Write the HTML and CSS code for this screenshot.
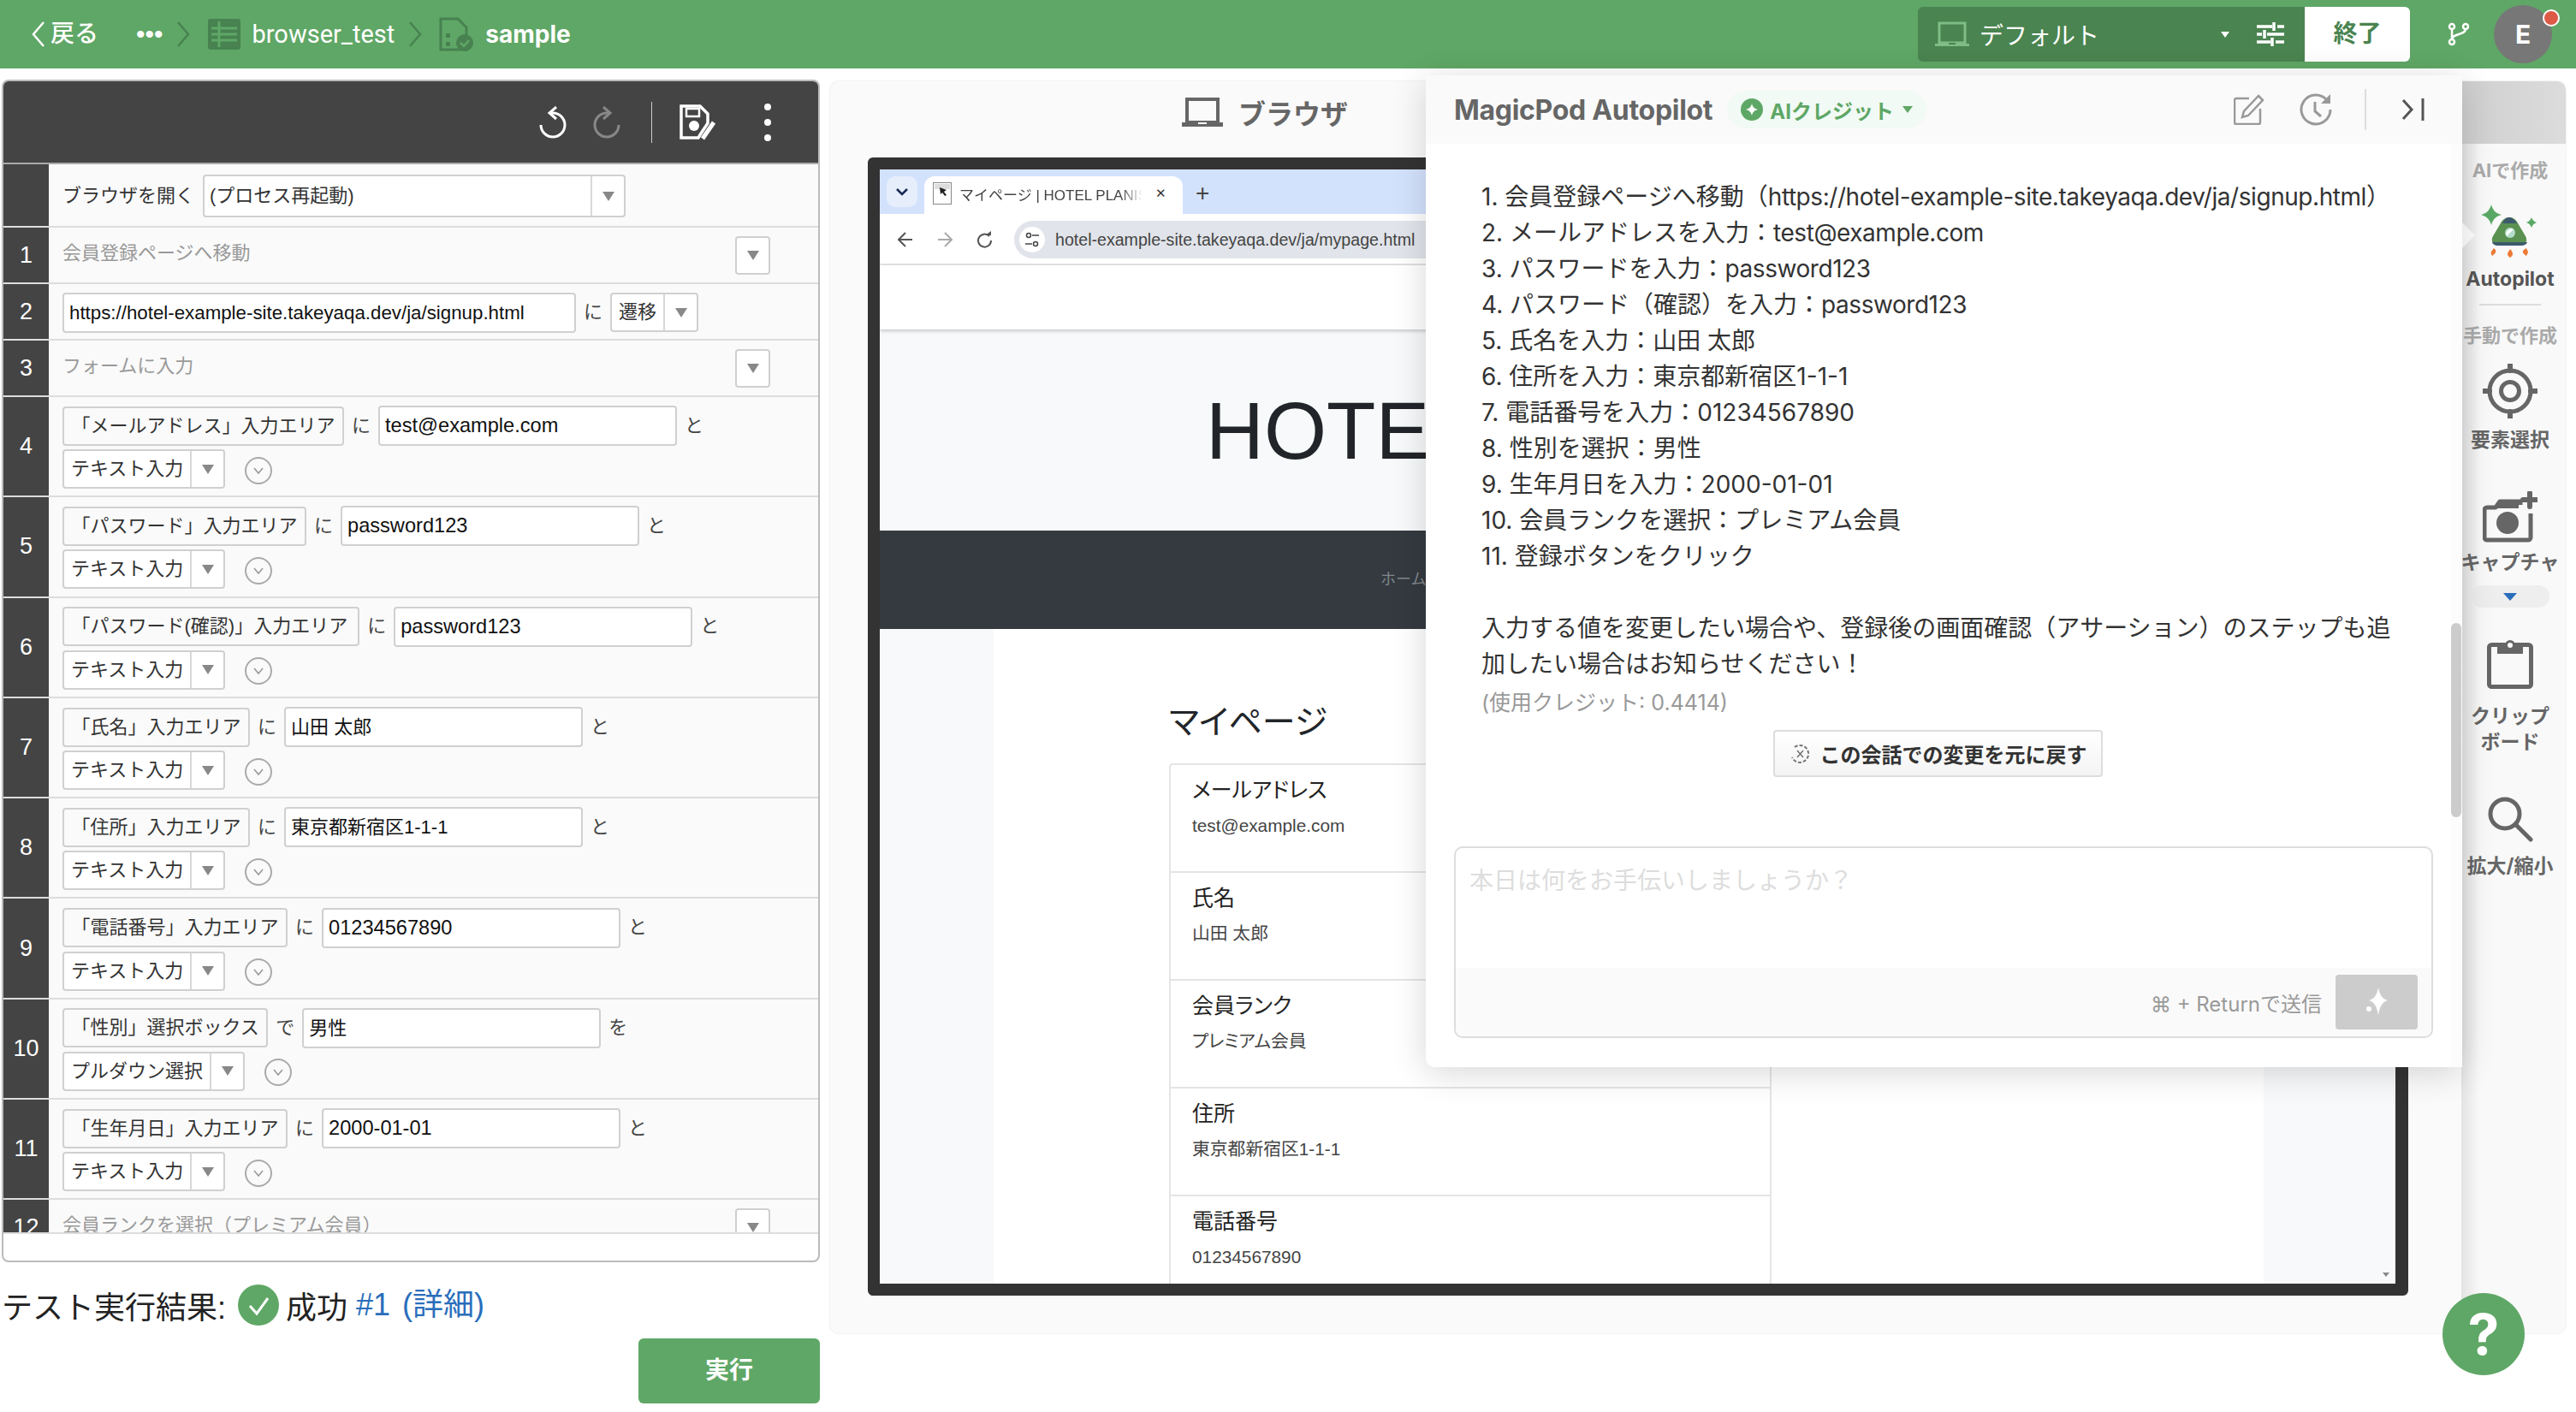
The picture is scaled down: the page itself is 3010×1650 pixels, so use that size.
FILE: index.html
```html
<!DOCTYPE html>
<html lang="ja">
<head>
	<meta charset="utf-8">
	<title>MagicPod</title>
	<link rel="stylesheet" href="styles.css">
</head>
<body>
	<!-- 上部バー -->
	<div class="topbar">
		<div class="crumbs">
			<span class="back"><svg width="18" height="36" viewBox="0 0 18 36"><path d="M15 4 3 18l12 14" fill="none" stroke="#fff" stroke-width="2.5"/></svg>戻る</span>
			<span class="more">•••</span>
			<svg class="sep" width="16" height="36" viewBox="0 0 16 36"><path d="M2 4l12 14L2 32" fill="none" stroke="#478250" stroke-width="2.5"/></svg>
			<svg width="40" height="40" viewBox="0 0 40 40"><rect x="1" y="2" width="38" height="36" rx="3" fill="#478250"/><path d="M5 13h30M5 20h30M5 27h30M14 5v30" stroke="#5fa766" stroke-width="3"/></svg>
			<span class="crumb">browser_test</span>
			<svg class="sep" width="16" height="36" viewBox="0 0 16 36"><path d="M2 4l12 14L2 32" fill="none" stroke="#478250" stroke-width="2.5"/></svg>
			<svg width="42" height="42" viewBox="0 0 42 42"><path d="M2 3h20l10 10v26H2z" fill="none" stroke="#478250" stroke-width="3"/><path d="M8 20h5v5H8zM8 30h5v5H8z" fill="#478250"/><circle cx="30" cy="31" r="10" fill="#478250"/><path d="M25 31l4 4 6-7" fill="none" stroke="#5fa766" stroke-width="2.5"/></svg>
			<span class="crumb crumb-now">sample</span>
		</div>
		<div class="top-right">
			<div class="device-box">
				<div class="device-pick">
					<svg width="40" height="30" viewBox="0 0 40 30"><path d="M5 2h30v23H5z" fill="none" stroke="#7fbd86" stroke-width="3"/><path d="M0 26h40v3H0z" fill="#7fbd86"/><path d="M16 25h8v2h-8z" fill="#4a8450"/></svg>
					<span class="device-name">デフォルト</span>
					<i class="caret caret-white"></i>
					<svg width="32" height="32" viewBox="0 0 32 32"><path d="M0 7h18M24 7h8M0 16h6M12 16h20M0 25h16M22 25h10" stroke="#fff" stroke-width="3.5"/><path d="M20 2v10M9 11v10M18 20v10" stroke="#fff" stroke-width="3.5"/></svg>
				</div>
				<div class="finish">終了</div>
			</div>
			<svg class="branch" width="26" height="28" viewBox="0 0 26 28"><g fill="none" stroke="#fff" stroke-width="2.5"><circle cx="5" cy="5" r="3"/><circle cx="21" cy="5" r="3"/><circle cx="5" cy="23" r="3"/><path d="M5 8v12M21 8c0 7-16 5-16 12"/></g></svg>
			<div class="avatar">E<span class="dot"></span></div>
		</div>
	</div>

	<div class="main">
		<!-- 左: テストステップ -->
		<div class="left">
			<div class="editor">
				<div class="editor-head">
					<svg width="34" height="38" viewBox="0 0 34 38"><path d="M14 8h3a14 14 0 1 1-14 14" fill="none" stroke="#fff" stroke-width="3"/><path d="M21 1l-8 7 8 7" fill="none" stroke="#fff" stroke-width="3"/></svg>
					<svg width="34" height="38" viewBox="0 0 34 38"><path d="M20 8h-3a14 14 0 1 0 14 14" fill="none" stroke="#888" stroke-width="3"/><path d="M13 1l8 7-8 7" fill="none" stroke="#888" stroke-width="3"/></svg>
					<span class="head-sep"></span>
					<svg class="head-save" width="44" height="42" viewBox="0 0 44 42"><path d="M3 2h22l9 9v11l-8 12-3 5H3z" fill="none" stroke="#fff" stroke-width="3.500"/><path d="M9 5h15v9H9z" fill="none" stroke="#fff" stroke-width="2.500"/><circle cx="18" cy="25" r="6" fill="#fff"/><path d="M28 40l13-19" stroke="#fff" stroke-width="5"/></svg>
					<svg class="head-dots" width="10" height="46" viewBox="0 0 10 46"><circle cx="5" cy="5" r="4" fill="#fff"/><circle cx="5" cy="23" r="4" fill="#fff"/><circle cx="5" cy="41" r="4" fill="#fff"/></svg>
				</div>
				<div class="steps">
					<div class="step step-open">
						<div class="num"></div>
						<div class="cells">
							<div class="line">
								<span class="word-first">ブラウザを開く</span>
								<div class="sel sel-wide"><span class="sel-text">(プロセス再起動)</span><span class="sel-arrow"><i class="caret"></i></span></div>
							</div>
						</div>
					</div>
					<div class="step step-note">
						<div class="num">1</div>
						<div class="cells note-cells"><span class="note">会員登録ページへ移動</span><span class="note-btn"><i class="caret"></i></span></div>
					</div>
					<div class="step step-note">
						<div class="num">2</div>
						<div class="cells">
							<div class="line">
								<div class="val val-url">https://hotel-example-site.takeyaqa.dev/ja/signup.html</div><span class="word">に</span>
								<div class="sel"><span class="sel-text">遷移</span><span class="sel-arrow"><i class="caret"></i></span></div>
							</div>
						</div>
					</div>
					<div class="step step-note">
						<div class="num">3</div>
						<div class="cells note-cells"><span class="note">フォームに入力</span><span class="note-btn"><i class="caret"></i></span></div>
					</div>
					<div class="step">
						<div class="num">4</div>
						<div class="cells">
							<div class="line"><span class="chip">「メールアドレス」入力エリア</span><span class="word">に</span><div class="val val-latin">test@example.com</div><span class="word">と</span></div>
							<div class="line"><div class="sel"><span class="sel-text">テキスト入力</span><span class="sel-arrow"><i class="caret"></i></span></div><span class="circle"><svg width="14" height="10" viewBox="0 0 14 10"><path d="M2 2l5 6 5-6" fill="none" stroke="#999" stroke-width="1.6"/></svg></span></div>
						</div>
					</div>
					<div class="step">
						<div class="num">5</div>
						<div class="cells">
							<div class="line"><span class="chip">「パスワード」入力エリア</span><span class="word">に</span><div class="val val-latin">password123</div><span class="word">と</span></div>
							<div class="line"><div class="sel"><span class="sel-text">テキスト入力</span><span class="sel-arrow"><i class="caret"></i></span></div><span class="circle"><svg width="14" height="10" viewBox="0 0 14 10"><path d="M2 2l5 6 5-6" fill="none" stroke="#999" stroke-width="1.6"/></svg></span></div>
						</div>
					</div>
					<div class="step">
						<div class="num">6</div>
						<div class="cells">
							<div class="line"><span class="chip chip-wide">「パスワード(確認)」入力エリア</span><span class="word">に</span><div class="val val-latin">password123</div><span class="word">と</span></div>
							<div class="line"><div class="sel"><span class="sel-text">テキスト入力</span><span class="sel-arrow"><i class="caret"></i></span></div><span class="circle"><svg width="14" height="10" viewBox="0 0 14 10"><path d="M2 2l5 6 5-6" fill="none" stroke="#999" stroke-width="1.6"/></svg></span></div>
						</div>
					</div>
					<div class="step">
						<div class="num">7</div>
						<div class="cells">
							<div class="line"><span class="chip">「氏名」入力エリア</span><span class="word">に</span><div class="val">山田 太郎</div><span class="word">と</span></div>
							<div class="line"><div class="sel"><span class="sel-text">テキスト入力</span><span class="sel-arrow"><i class="caret"></i></span></div><span class="circle"><svg width="14" height="10" viewBox="0 0 14 10"><path d="M2 2l5 6 5-6" fill="none" stroke="#999" stroke-width="1.6"/></svg></span></div>
						</div>
					</div>
					<div class="step">
						<div class="num">8</div>
						<div class="cells">
							<div class="line"><span class="chip">「住所」入力エリア</span><span class="word">に</span><div class="val">東京都新宿区1-1-1</div><span class="word">と</span></div>
							<div class="line"><div class="sel"><span class="sel-text">テキスト入力</span><span class="sel-arrow"><i class="caret"></i></span></div><span class="circle"><svg width="14" height="10" viewBox="0 0 14 10"><path d="M2 2l5 6 5-6" fill="none" stroke="#999" stroke-width="1.6"/></svg></span></div>
						</div>
					</div>
					<div class="step">
						<div class="num">9</div>
						<div class="cells">
							<div class="line"><span class="chip">「電話番号」入力エリア</span><span class="word">に</span><div class="val val-latin">01234567890</div><span class="word">と</span></div>
							<div class="line"><div class="sel"><span class="sel-text">テキスト入力</span><span class="sel-arrow"><i class="caret"></i></span></div><span class="circle"><svg width="14" height="10" viewBox="0 0 14 10"><path d="M2 2l5 6 5-6" fill="none" stroke="#999" stroke-width="1.6"/></svg></span></div>
						</div>
					</div>
					<div class="step">
						<div class="num">10</div>
						<div class="cells">
							<div class="line"><span class="chip">「性別」選択ボックス</span><span class="word">で</span><div class="val">男性</div><span class="word">を</span></div>
							<div class="line"><div class="sel"><span class="sel-text">プルダウン選択</span><span class="sel-arrow"><i class="caret"></i></span></div><span class="circle"><svg width="14" height="10" viewBox="0 0 14 10"><path d="M2 2l5 6 5-6" fill="none" stroke="#999" stroke-width="1.6"/></svg></span></div>
						</div>
					</div>
					<div class="step">
						<div class="num">11</div>
						<div class="cells">
							<div class="line"><span class="chip">「生年月日」入力エリア</span><span class="word">に</span><div class="val val-latin">2000-01-01</div><span class="word">と</span></div>
							<div class="line"><div class="sel"><span class="sel-text">テキスト入力</span><span class="sel-arrow"><i class="caret"></i></span></div><span class="circle"><svg width="14" height="10" viewBox="0 0 14 10"><path d="M2 2l5 6 5-6" fill="none" stroke="#999" stroke-width="1.6"/></svg></span></div>
						</div>
					</div>
					<div class="step step-note">
						<div class="num">12</div>
						<div class="cells note-cells"><span class="note">会員ランクを選択（プレミアム会員）</span><span class="note-btn"><i class="caret"></i></span></div>
					</div>
				</div>
				<div class="editor-foot"></div>
			</div>
			<div class="result">
				<span>テスト実行結果:</span>
				<svg class="ok" width="48" height="48" viewBox="0 0 48 48"><circle cx="24" cy="24" r="24" fill="#5fa766"/><path d="M14 25l8 9 13-18" fill="none" stroke="#fff" stroke-width="3"/></svg>
				<span>成功</span>
				<a class="link">#1</a>
				<a class="link link-detail">(詳細)</a>
			</div>
			<div class="run-wrap"><div class="run">実行</div></div>
		</div>

		<!-- 右: ブラウザプレビュー -->
		<div class="workspace">
			<div class="preview">
				<div class="preview-title">
					<svg width="48" height="34" viewBox="0 0 48 34"><path d="M6 2h36v27H6z" fill="none" stroke="#666" stroke-width="4"/><path d="M0 29h48v5H0z" fill="#666"/><path d="M19 29h10v2H19z" fill="#fafafa"/></svg>
					<span>ブラウザ</span>
				</div>
				<div class="frame">
					<div class="tabstrip">
						<span class="tab-menu"><svg width="16" height="12" viewBox="0 0 16 12"><path d="M2 3l6 6 6-6" fill="none" stroke="#1a2a55" stroke-width="2.6"/></svg></span>
						<div class="tab">
							<svg width="22" height="26" viewBox="0 0 22 26"><rect x=".5" y=".5" width="21" height="25" fill="#fff" stroke="#888"/><rect x="2" y="2" width="18" height="6" fill="#ddd"/><path d="M8 6l8 3-3 2 3 4-2 1-3-4-2 2z" fill="#222"/></svg>
							<span class="tab-title">マイページ | HOTEL PLANISPHERE</span>
							<span class="tab-x">✕</span>
						</div>
						<span class="tab-plus">+</span>
					</div>
					<div class="toolbar">
						<svg width="18" height="20" viewBox="0 0 18 20"><path d="M17 10H2M9 2l-8 8 8 8" fill="none" stroke="#555" stroke-width="2"/></svg>
						<svg width="18" height="20" viewBox="0 0 18 20"><path d="M1 10h15M9 2l8 8-8 8" fill="none" stroke="#aaa" stroke-width="2"/></svg>
						<svg width="18" height="20" viewBox="0 0 18 20"><path d="M15 6a7.500 7.500 0 1 0 2 5" fill="none" stroke="#555" stroke-width="2"/><path d="M10 5h7V0z" fill="#555"/></svg>
						<div class="omnibox">
							<span class="site-icon"><svg width="18" height="18" viewBox="0 0 18 18"><circle cx="5" cy="4" r="2.500" fill="none" stroke="#444" stroke-width="1.500"/><circle cx="13" cy="14" r="2.500" fill="none" stroke="#444" stroke-width="1.500"/><path d="M9 4h8M1 14h8" stroke="#444" stroke-width="1.500"/></svg></span>
							<span class="url">hotel-example-site.takeyaqa.dev/ja/mypage.html</span>
						</div>
					</div>
					<div class="site-head"></div>
					<div class="site-hero">HOTEL PLANISPHERE</div>
					<div class="site-nav">ホーム</div>
					<div class="site-body">
						<div class="site-content">
							<div class="site-h">マイページ</div>
							<div class="items">
								<div class="item"><div class="item-label">メールアドレス</div><div class="item-val">test@example.com</div></div>
								<div class="item"><div class="item-label">氏名</div><div class="item-val">山田 太郎</div></div>
								<div class="item"><div class="item-label">会員ランク</div><div class="item-val">プレミアム会員</div></div>
								<div class="item"><div class="item-label">住所</div><div class="item-val">東京都新宿区1-1-1</div></div>
								<div class="item"><div class="item-label">電話番号</div><div class="item-val">01234567890</div></div>
							</div>
						</div>
						<i class="site-scroll"></i>
					</div>
				</div>
			</div>
			<!-- ツール列 -->
			<div class="tools">
				<div class="tools-top"></div>
				<div class="tool-group">AIで作成</div>
				<div class="tool tool-ai">
					<svg width="68" height="62" viewBox="0 0 68 62"><path d="M12 0c2 7 5 10 12 12-7 2-10 5-12 12-2-7-5-10-12-12 7-2 10-5 12-12z" fill="#5aa866"/><path d="M59 15c1 3 3 5 6 6-3 1-5 3-6 6-1-3-3-5-6-6 3-1 5-3 6-6z" fill="#5aa866"/><path d="M33 15c4 0 7 2 9 5l10 17c3 5 0 11-6 11H20c-6 0-9-6-6-11l10-17c2-3 5-5 9-5z" fill="#5a9150"/><path d="M25 22c2-5 5-7 8-7s6 2 9 7z" fill="#3d5a6c"/><path d="M13 44h41c-1 3-4 4-8 4H21c-4 0-7-1-8-4z" fill="#3d5a6c"/><circle cx="34" cy="33" r="6" fill="#b4dccb"/><path d="M30 37a6 6 0 0 1 8-8z" fill="#fff"/><path d="M15 51c2 2 3 3 2 5s-4 4-4 4-2-3-1-5zM34 52c2 2 3 4 3 6s-3 4-3 4-3-2-3-4 2-4 3-6zM53 51c1 2 2 4 2 5l-2 4s-3-2-4-4 2-4 4-5z" fill="#ec7a35"/></svg>
					<span class="tool-name tool-name-ai">Autopilot</span>
				</div>
				<div class="tool-line"></div>
				<div class="tool-group">手動で作成</div>
				<div class="tool tool-target">
					<svg width="64" height="64" viewBox="0 0 64 64"><g fill="none" stroke="#666" stroke-width="5"><circle cx="32" cy="32" r="24"/><circle cx="32" cy="32" r="10.500"/></g><path d="M32 0v8M32 56v8M0 32h8M56 32h8" stroke="#666" stroke-width="6" stroke-linecap="round"/></svg>
					<span class="tool-name">要素選択</span>
				</div>
				<div class="tool tool-cam">
					<svg width="64" height="60" viewBox="0 0 64 60"><path d="M44 16v-4H20l-5 7H5a3 3 0 0 0-3 3v32a3 3 0 0 0 3 3h48a3 3 0 0 0 3-3V26" fill="none" stroke="#666" stroke-width="5" stroke-linejoin="round"/><path d="M14 19l6-7h22v8H14z" fill="#666"/><circle cx="29" cy="37" r="13" fill="#666"/><path d="M55 2v16M47 10h16" stroke="#666" stroke-width="6" stroke-linecap="round"/></svg>
					<span class="tool-name">キャプチャ</span>
					<span class="tool-more"><i class="caret-blue"></i></span>
				</div>
				<div class="tool tool-clip">
					<svg width="54" height="60" viewBox="0 0 54 60"><rect x="2.500" y="8.500" width="49" height="49" rx="3" fill="none" stroke="#666" stroke-width="5"/><path d="M12 9h9a6 6 0 0 1 12 0h9v10H12z" fill="#666"/><circle cx="27" cy="9" r="3" fill="#fafafa"/></svg>
					<span class="tool-name">クリップ<br>ボード</span>
				</div>
				<div class="tool tool-zoom">
					<svg width="54" height="54" viewBox="0 0 54 54"><circle cx="21" cy="21" r="17" fill="none" stroke="#666" stroke-width="5"/><path d="M33 33l18 18" stroke="#666" stroke-width="5" stroke-linecap="round"/></svg>
					<span class="tool-name">拡大/縮小</span>
				</div>
				<i class="tool-arrow"></i>
			</div>
		</div>
	</div>

	<!-- Autopilot パネル -->
	<div class="pilot">
		<div class="pilot-head">
			<span class="pilot-title">MagicPod Autopilot</span>
			<span class="credit">
				<svg width="26" height="26" viewBox="0 0 26 26"><circle cx="13" cy="13" r="13" fill="#5fa766"/><path d="M13 6c1 4 3 6 7 7-4 1-6 3-7 7-1-4-3-6-7-7 4-1 6-3 7-7z" fill="#fff"/></svg>
				AIクレジット<i class="caret caret-green"></i>
			</span>
			<span class="pilot-tools">
				<svg width="36" height="36" viewBox="0 0 36 36"><path d="M18 5H3a2 2 0 0 0-2 2v26a2 2 0 0 0 2 2h26a2 2 0 0 0 2-2V17" fill="none" stroke="#999" stroke-width="2.500"/><path d="M29 2l5 5-17 18-7 2 2-7z" fill="none" stroke="#999" stroke-width="2.500"/></svg>
				<svg width="38" height="38" viewBox="0 0 38 38"><path d="M32 8A17 17 0 1 0 36 19" fill="none" stroke="#999" stroke-width="3"/><path d="M36 1v11H25z" fill="#999"/><path d="M18 10v11l7 6" fill="none" stroke="#999" stroke-width="3"/></svg>
				<span class="pilot-sep"></span>
				<svg width="28" height="26" viewBox="0 0 28 26"><path d="M2 2l10 11L2 24" fill="none" stroke="#555" stroke-width="3"/><path d="M25 0v26" stroke="#555" stroke-width="3"/></svg>
			</span>
		</div>
		<div class="pilot-body">
			<div class="plan">1. 会員登録ページへ移動（<span class="lat">https://hotel-example-site.takeyaqa.dev/ja/signup.html</span>）<br>2. メールアドレスを入力：<span class="lat">test@example.com</span><br>3. パスワードを入力：<span class="lat">password123</span><br>4. パスワード（確認）を入力：<span class="lat">password123</span><br>5. 氏名を入力：山田 太郎<br>6. 住所を入力：東京都新宿区1-1-1<br>7. 電話番号を入力：01234567890<br>8. 性別を選択：男性<br>9. 生年月日を入力：2000-01-01<br>10. 会員ランクを選択：プレミアム会員<br>11. 登録ボタンをクリック<br><br>入力する値を変更したい場合や、登録後の画面確認（アサーション）のステップも追<br>加したい場合はお知らせください！</div>
			<div class="used">(使用クレジット: 0.4414)</div>
			<div class="revert-wrap">
				<div class="revert">
					<svg width="24" height="24" viewBox="0 0 24 24"><path d="M6 4a10 10 0 1 1-3 12" fill="none" stroke="#777" stroke-width="2" stroke-dasharray="4 2"/><path d="M9 8l7 8M16 8l-7 8" stroke="#777" stroke-width="1.600"/></svg>
					この会話での変更を元に戻す
				</div>
			</div>
		</div>
		<div class="composer">
			<div class="composer-text">本日は何をお手伝いしましょうか？</div>
			<div class="composer-foot">
				<span class="hint">⌘ + Returnで送信</span>
				<span class="send"><svg width="30" height="40" viewBox="0 0 30 40"><path d="M17 3c2 10 5 13 11 15-6 2-9 6-11 17-2-11-5-15-11-17 6-2 9-5 11-15z" fill="#fff"/><circle cx="6" cy="28" r="3" fill="#fff"/></svg></span>
			</div>
		</div>
		<i class="pilot-track"></i>
		<i class="pilot-thumb"></i>
	</div>

	<div class="help">?</div>
</body>
</html>
```
FILE: styles.css
```css
*{box-sizing: border-box;}
html,body{margin: 0;padding: 0;}
body{
	position: relative;
	width: 3010px;
	height: 1650px;
	overflow: hidden;
	background: #fff;
	color: #222;
	font-family: "Liberation Sans","Noto Sans CJK JP",sans-serif;
}
svg{display: block;flex: none;}
i{display: block;}

/* 上部バー */
.topbar{
	height: 80px;
	background: #5fa766;
	display: flex;
	align-items: center;
	justify-content: space-between;
	padding: 0 28px 0 36px;
}
.crumbs{display: flex;align-items: center;color: #fff;}
.back{display: flex;align-items: center;gap: 5px;font-size: 28px;font-weight: 500;line-height: 36px;}
.more{margin-left: 44px;font-size: 30px;line-height: 36px;font-family: "Liberation Sans",sans-serif;}
.sep{margin: 0 20px 0 15px;}
.crumb{margin-left: 13px;font-family: Roboto,sans-serif;font-size: 29px;line-height: 36px;color: #fff;}
.crumb + .sep{margin-left: 16px;}
.crumb-now{font-family: Inter,sans-serif;font-weight: 700;font-size: 28px;margin-left: 12px;}
.top-right{display: flex;align-items: center;}
.device-box{
	width: 575px;
	height: 64px;
	display: flex;
	border-radius: 6px;
	overflow: hidden;
}
.device-pick{
	width: 452px;
	background: #4a8450;
	display: flex;
	align-items: center;
	padding: 0 24px 0 20px;
}
.device-name{margin-left: 12px;flex: 1;font-size: 28px;color: #fff;}
.finish{
	flex: 1;
	background: #fff;
	color: #4a8450;
	font-size: 28px;
	font-weight: 700;
	text-align: center;
	line-height: 64px;
}
.caret{
	width: 0;
	height: 0;
	border-left: 7px solid transparent;
	border-right: 7px solid transparent;
	border-top: 11px solid #888;
}
.caret-white{border-left-width: 5px;border-right-width: 5px;border-top: 7px solid #fff;margin-right: 32px;}
.caret-green{border-left-width: 6px;border-right-width: 6px;border-top: 8px solid #5fa766;margin-left: 2px;}
.branch{margin-left: 44px;}
.avatar{
	position: relative;
	width: 68px;
	height: 68px;
	margin-left: 28px;
	border-radius: 50%;
	background: #777;
	color: #fff;
	font-family: Inter,sans-serif;
	font-size: 30px;
	font-weight: 700;
	line-height: 68px;
	text-align: center;
}
.dot{
	position: absolute;
	top: 5px;
	right: -9px;
	width: 20px;
	height: 20px;
	border-radius: 50%;
	background: #dd5a47;
	border: 2px solid #fff;
}

/* レイアウト */
.main{display: flex;padding: 13px 12px 0 2px;}
.left{width: 956px;flex: none;}
.workspace{
	flex: 1;
	margin: 2px 0 0 12px;
	height: 1463px;
	background: #fafafa;
	border-radius: 10px;
	display: flex;
	box-shadow: 0 0 2px rgba(0,0,0,.18);
	overflow: hidden;
}

/* テストステップ */
.editor{border: 2px solid #bbb;border-radius: 8px;overflow: hidden;height: 1382px;background: #fff;}
.editor-head{
	height: 95px;
	background: #444;
	display: flex;
	align-items: center;
	justify-content: flex-end;
	gap: 29px;
	padding-right: 54px;
}
.head-sep{width: 1px;height: 48px;background: #ccc;margin: 0 0 0 6px;}
.head-save{margin-left: 2px;}
.head-dots{margin-left: 26px;}
.steps{height: 1250px;overflow: hidden;background: #fafafa;border-top: 2px solid #aaa;}
.editor-foot{height: 33px;border-top: 2px solid #ddd;}
.step{display: flex;height: 117.3px;border-bottom: 2px solid #ddd;flex: none;}
.step-open{height: 74px;}
.step-note{height: 66px;}
.num{
	width: 53px;
	flex: none;
	background: #444;
	color: #fff;
	font-size: 27px;
	display: flex;
	align-items: center;
	justify-content: center;
}
.cells{
	flex: 1;
	padding: 2px 0 0 16px;
	display: flex;
	flex-direction: column;
	justify-content: center;
	gap: 4px;
	font-size: 22px;
	line-height: 30px;
}
.note-cells{flex-direction: row;align-items: center;justify-content: space-between;padding: 0 56px 0 16px;}
.note{color: #999;margin-bottom: 4px;}
.note-btn{
	width: 41px;
	height: 45px;
	border: 2px solid #d0d0d0;
	border-radius: 4px;
	background: #fff;
	display: flex;
	align-items: center;
	justify-content: center;
}
.line{display: flex;align-items: center;}
.word-first{margin: 0 9px 0 0;color: #333;}
.word{margin: 0 9px;color: #444;}
.chip{
	height: 46px;
	padding: 0 8.5px;
	background: #fafafa;
	border: 2px solid #d0d0d0;
	border-radius: 4px;
	line-height: 42px;
	color: #333;
}
.chip-wide{padding-right: 12px;}
.val{
	width: 349px;
	height: 47px;
	padding: 0 6px;
	background: #fff;
	border: 2px solid #d0d0d0;
	border-radius: 4px;
	line-height: 43px;
	color: #111;
}
.val-latin{font-size: 23.6px;}
.val-url{width: 600px;font-size: 22.3px;}
.sel{
	height: 46px;
	background: #fff;
	border: 2px solid #d0d0d0;
	border-radius: 4px;
	display: flex;
}
.sel-wide{width: 494px;height: 50px;margin-left: 1px;}
.sel-text{flex: 1;padding: 0 8px;line-height: 42px;white-space: nowrap;color: #333;}
.sel-wide .sel-text{padding: 0 6px;line-height: 46px;}
.sel-arrow{
	width: 39px;
	border-left: 2px solid #d8d8d8;
	display: flex;
	align-items: center;
	justify-content: center;
}
.circle{
	width: 32px;
	height: 32px;
	margin: 3px 0 0 23px;
	border: 2px solid #aaa;
	border-radius: 50%;
	display: flex;
	align-items: center;
	justify-content: center;
}
.result{
	height: 89px;
	display: flex;
	align-items: center;
	font-size: 36px;
	color: #222;
	padding-top: 10px;
}
.ok{margin: 0 8px 0 14px;}
.link{color: #2a6ebb;margin-left: 10px;line-height: 54px;}
.link-detail{margin-left: 14px;}
.run-wrap{display: flex;justify-content: flex-end;}
.run{
	width: 212px;
	height: 76px;
	background: #5fa766;
	border-radius: 6px;
	color: #fff;
	font-size: 28px;
	font-weight: 700;
	line-height: 76px;
	text-align: center;
}

/* ブラウザプレビュー */
.preview{flex: 1;min-width: 0;padding: 0 62px 44px 44px;display: flex;flex-direction: column;}
.preview-title{
	height: 89px;
	padding: 0 0 18px 367px;
	display: flex;
	align-items: center;
	gap: 18px;
	font-size: 32px;
	font-weight: 700;
	color: #666;
}
.frame{
	flex: 1;
	min-height: 0;
	border: solid #333;
	border-width: 14px 15px 14px 14px;
	border-radius: 6px;
	background: #fff;
	display: flex;
	flex-direction: column;
	overflow: hidden;
}
.tabstrip{
	height: 52px;
	flex: none;
	background: #d3e2fc;
	display: flex;
	align-items: flex-end;
	padding-left: 8px;
}
.tab-menu{
	width: 36px;
	height: 36px;
	margin-bottom: 8px;
	border-radius: 10px;
	background: #e6eefc;
	display: flex;
	align-items: center;
	justify-content: center;
}
.tab{
	width: 302px;
	height: 44px;
	margin-left: 8px;
	padding: 0 12px 4px 10px;
	background: #fff;
	border-radius: 12px 12px 0 0;
	display: flex;
	align-items: center;
	gap: 9px;
}
.tab-title{
	width: 214px;
	overflow: hidden;
	white-space: nowrap;
	font-size: 17px;
	color: #444;
	-webkit-mask-image: linear-gradient(90deg,#000 88%,transparent);
	mask-image: linear-gradient(90deg,#000 88%,transparent);
}
.tab-x{font-size: 15px;color: #333;margin-left: 6px;}
.tab-plus{margin: 0 0 6px 15px;font-size: 28px;line-height: 36px;color: #444;}
.toolbar{
	height: 60px;
	flex: none;
	background: #fff;
	border-bottom: 2px solid #e2e2e2;
	display: flex;
	align-items: center;
	padding: 2px 0 0 21px;
	gap: 28px;
}
.omnibox{
	flex: 1;
	height: 44px;
	margin-left: -2px;
	background: #e1e4ea;
	border-radius: 22px 0 0 22px;
	display: flex;
	align-items: center;
	padding-left: 6px;
	gap: 12px;
}
.site-icon{
	width: 30px;
	height: 30px;
	background: #fff;
	border-radius: 50%;
	display: flex;
	align-items: center;
	justify-content: center;
}
.url{font-size: 19.6px;color: #444;white-space: nowrap;}
.site-head{height: 75px;flex: none;background: #fff;box-shadow: 0 2px 4px rgba(0,0,0,.2);position: relative;}
.site-hero{
	height: 235px;
	flex: none;
	background: #f8f9fa;
	padding: 67px 0 0 381px;
	font-size: 94px;
	line-height: 104px;
	color: #212529;
	white-space: nowrap;
}
.site-nav{
	height: 115px;
	flex: none;
	background: #343a40;
	padding-left: 585px;
	color: #80868c;
	font-size: 18px;
	line-height: 115px;
}
.site-body{
	position: relative;
	flex: 1;
	min-height: 0;
	background: #f8f9fa;
	padding: 0 154px 0 133px;
}
.site-content{height: 100%;background: #fff;padding-left: 205px;overflow: hidden;font-feature-settings: "palt";}
.site-h{font-size: 39px;line-height: 50px;padding-top: 84px;height: 157px;color: #212529;}
.items{width: 704px;border: 2px solid #e5e5e5;border-radius: 4px 4px 0 0;}
.item{height: 126px;padding: 12px 0 0 25px;border-bottom: 2px solid #e5e5e5;}
.item-label{font-size: 25px;line-height: 34px;color: #222;}
.item-val{margin-top: 10px;font-size: 20.8px;line-height: 30px;color: #444;}
.site-scroll{
	position: absolute;
	right: 7px;
	bottom: 8px;
	border-left: 4px solid transparent;
	border-right: 4px solid transparent;
	border-top: 5px solid #888;
}

/* ツール列 */
.tools{
	position: relative;
	width: 122px;
	flex: none;
	padding-right: 8px;
	background: linear-gradient(90deg,#e3e3e3,#f9f9f9 22px);
	display: flex;
	flex-direction: column;
	align-items: center;
	color: #666;
	font-family: Inter,"Noto Sans CJK JP",sans-serif;
}
.tools-top{width: 122px;height: 73px;flex: none;background: linear-gradient(90deg,#cfcfcf,#dcdcdc);margin-right: -8px;}
.tool-group{margin-top: 14px;font-size: 22px;line-height: 34px;font-weight: 700;color: #aaa;white-space: nowrap;}
.tool{display: flex;flex-direction: column;align-items: center;text-align: center;}
.tool-name{font-size: 23px;line-height: 30px;font-weight: 700;color: #666;white-space: nowrap;}
.tool-name-ai{color: #555;margin-top: 10px;font-size: 23px;}
.tool-ai{margin-top: 23px;}
.tool-line{width: 72px;height: 2px;background: #ddd;margin-top: 14px;}
.tool-line + .tool-group{margin-top: 18px;}
.tool-target{margin-top: 16px;}
.tool-target .tool-name{margin-top: 10px;}
.tool-cam{margin-top: 45px;}
.tool-cam .tool-name{margin-top: 8px;}
.tool-more{
	width: 92px;
	height: 26px;
	margin-top: 12px;
	background: #eee;
	border-radius: 13px;
	display: flex;
	align-items: center;
	justify-content: center;
}
.caret-blue{
	border-left: 8px solid transparent;
	border-right: 8px solid transparent;
	border-top: 9px solid #2a6ebb;
}
.tool-clip{margin-top: 35px;}
.tool-clip .tool-name{margin-top: 17px;}
.tool-zoom{margin-top: 48px;}
.tool-zoom .tool-name{margin-top: 13px;}
.tool-arrow{
	position: absolute;
	left: 0;
	top: 164px;
	border-top: 16px solid transparent;
	border-bottom: 16px solid transparent;
	border-left: 16px solid #fff;
}

/* Autopilot パネル */
.pilot{
	position: absolute;
	left: 1666px;
	top: 88px;
	width: 1211px;
	height: 1159px;
	background: #fff;
	border-radius: 0 0 10px 10px;
	box-shadow: 0 6px 40px rgba(0,0,0,.16);
	display: flex;
	flex-direction: column;
	font-family: Inter,"Noto Sans CJK JP",sans-serif;
}
.pilot-head{
	height: 80px;
	flex: none;
	background: #fafafa;
	display: flex;
	align-items: center;
	padding-left: 33px;
}
.pilot-title{font-size: 32px;font-weight: 700;color: #666;letter-spacing: -.3px;}
.credit{
	height: 44px;
	margin-left: 17px;
	padding: 0 16px;
	background: #f1faf4;
	border-radius: 22px;
	display: flex;
	align-items: center;
	gap: 8px;
	font-size: 24px;
	font-weight: 700;
	color: #5fa766;
}
.pilot-tools{margin-left: auto;margin-right: 43px;display: flex;align-items: center;gap: 41px;}
.pilot-sep{width: 2px;height: 48px;background: #ddd;margin-left: -3px;}
.pilot-body{flex: 1;min-height: 0;padding: 41px 0 0 65px;}
.plan{font-size: 28px;line-height: 42px;color: #333;white-space: nowrap;}
.lat{letter-spacing: -.45px;}
.used{margin-top: 6px;font-size: 25px;line-height: 36px;color: #999;}
.revert-wrap{display: flex;margin: 14px 0 0 341px;}
.revert{
	width: 385px;
	height: 55px;
	border: 2px solid #ddd;
	border-radius: 4px;
	background: linear-gradient(#fff,#f4f4f4);
	display: flex;
	align-items: center;
	justify-content: center;
	gap: 12px;
	font-size: 24px;
	font-weight: 700;
	color: #333;
	white-space: nowrap;
}
.composer{
	height: 224px;
	flex: none;
	margin: 0 34px 34px 33px;
	border: 2px solid #ddd;
	border-radius: 10px;
	overflow: hidden;
	display: flex;
	flex-direction: column;
}
.composer-text{flex: 1;padding: 18px 16px;font-size: 28px;line-height: 40px;color: #ddd;}
.composer-foot{
	height: 80px;
	flex: none;
	background: #fafafa;
	display: flex;
	align-items: center;
	justify-content: flex-end;
	padding-right: 16px;
	gap: 16px;
}
.hint{font-size: 24px;color: #999;}
.send{
	width: 96px;
	height: 64px;
	background: #ccc;
	border-radius: 4px;
	display: flex;
	align-items: center;
	justify-content: center;
}
.pilot-track{position: absolute;right: 0;top: 80px;width: 13px;bottom: 0;background: #fcfcfc;}
.pilot-thumb{position: absolute;right: 1px;top: 640px;width: 12px;height: 227px;border-radius: 6px;background: #ccc;}
.help{
	position: absolute;
	left: 2854px;
	top: 1511px;
	width: 96px;
	height: 96px;
	border-radius: 50%;
	background: #5fa766;
	color: #fff;
	font-family: Inter,sans-serif;
	font-size: 66px;
	font-weight: 700;
	line-height: 96px;
	text-align: center;
}
```
